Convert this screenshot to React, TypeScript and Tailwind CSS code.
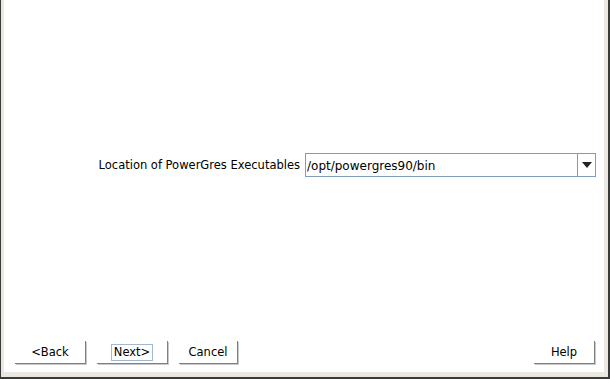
import React from "react";

function WizButton({ label, width, focused }: { label: string; width: string; focused?: boolean }) {
  return (
    <button
      className={`${width} h-[23px] bg-white border-r border-b border-[#808080] shadow-[1px_1px_0_#c8c8c8] flex items-center justify-center text-[11.5px] text-black pt-px`}
    >
      {focused ? (
        <span className="border border-[#a3b8cc] px-[2px] leading-[15px]">{label}</span>
      ) : (
        <span className="leading-[15px]">{label}</span>
      )}
    </button>
  );
}

export default function App() {
  return (
    <div
      className="w-[610px] h-[379px] bg-[#3a3a3a] pl-px pr-[2px] pb-[2px] overflow-hidden"
      style={{ fontFamily: '"DejaVu Sans", sans-serif' }}
    >
      <div className="w-full h-full bg-[#ebe8e1] pl-[3px] pr-[4px] pb-[5px]">
        <div className="w-full h-full bg-white flex flex-col">
          {/* Install location row */}
          <div className="mt-[153px] h-[24px] flex items-center pr-[8px]">
            <span className="flex-1 text-[11.5px] text-black text-right whitespace-nowrap pt-[2px]">
              Location of PowerGres Executables
            </span>
            <div className="ml-[5px] w-[291px] h-[24px] border border-[#7f9db9] flex items-stretch bg-white">
              <div className="flex-1 flex items-center pl-px pt-px text-[12px] text-black">/opt/powergres90/bin</div>
              <div className="w-[18px] border-l border-[#7f9db9] flex items-center justify-center">
                <svg width="10" height="6" viewBox="0 0 10 6">
                  <polygon points="0,0 10,0 5,6" fill="#222" />
                </svg>
              </div>
            </div>
          </div>

          <div className="flex-1" />

          {/* Buttons */}
          <div className="flex items-center pl-[11px] pr-[9px] pb-[8px]">
            <WizButton label="<Back" width="w-[71px]" />
            <div className="ml-[11px]">
              <WizButton label="Next>" width="w-[71px]" focused />
            </div>
            <div className="ml-[11px]">
              <WizButton label="Cancel" width="w-[59px]" />
            </div>
            <div className="flex-1" />
            <WizButton label="Help" width="w-[61px]" />
          </div>
        </div>
      </div>
    </div>
  );
}
